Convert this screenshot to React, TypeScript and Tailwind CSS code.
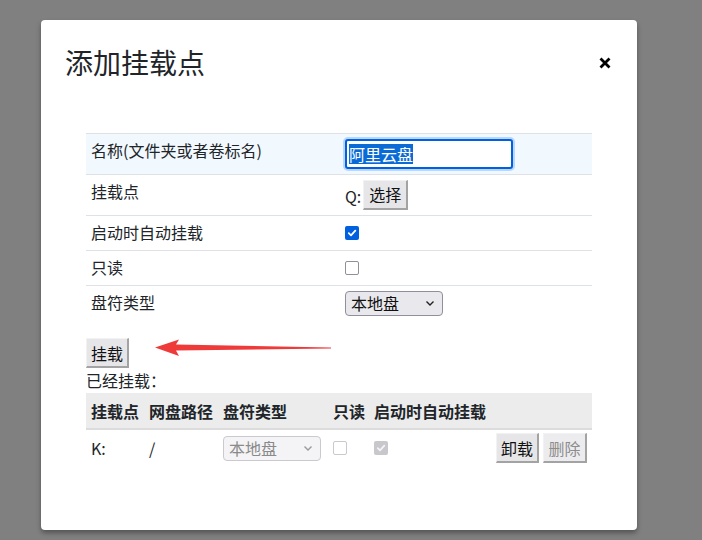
import React from 'react';

const font = { fontFamily: '"Noto Sans CJK SC", "Noto Sans", sans-serif' };

function Check({ checked, disabled }: { checked?: boolean; disabled?: boolean }) {
  if (checked) {
    return (
      <span
        className={`inline-flex h-[14px] w-[14px] items-center justify-center rounded-[2px] ${
          disabled ? 'bg-[#c8c8cc]' : 'bg-[#0060df]'
        }`}
      >
        <svg width="10" height="10" viewBox="0 0 10 10">
          <path d="M1.8 5.2 L4 7.3 L8.3 2.6" fill="none" stroke={disabled ? '#f4f4f6' : '#fff'} strokeWidth="1.8" strokeLinecap="round" strokeLinejoin="round" />
        </svg>
      </span>
    );
  }
  return (
    <span
      className={`inline-block h-[14px] w-[14px] rounded-[2px] border-[1.5px] bg-white ${
        disabled ? 'border-[#c9c9cf]' : 'border-[#8f8f9d]'
      }`}
    />
  );
}

function Btn({ children, disabled, w }: { children: React.ReactNode; disabled?: boolean; w: string }) {
  return (
    <span
      className={`inline-flex h-[30px] ${w} items-center justify-center border-t border-l border-t-[#f2f2f2] border-l-[#f2f2f2] border-b-2 border-r-2 border-b-[#a3a3a3] border-r-[#a3a3a3] text-[16px] leading-none ${
        disabled ? 'bg-[#ececee] text-[#8d8d8d]' : 'bg-[#e6e6e9] text-[#111]'
      }`}
    >
      {children}
    </span>
  );
}

function Select({ disabled }: { disabled?: boolean }) {
  return (
    <span
      className={`inline-flex h-[25px] w-[98px] items-center justify-between rounded-[4px] border pl-[5px] pr-[7px] text-[16px] leading-none ${
        disabled ? 'border-[#c9c9cf] bg-[#f4f4f6] text-[#8a8a8a]' : 'border-[#8f8f9d] bg-[#e9e9ed] text-[#111]'
      }`}
    >
      <span>本地盘</span>
      <svg width="10" height="7" viewBox="0 0 10 7">
        <path d="M1.5 1.5 L5 5 L8.5 1.5" fill="none" stroke={disabled ? '#9a9a9a' : '#222'} strokeWidth="1.4" />
      </svg>
    </span>
  );
}

function Row({ label, h, first, children }: { label: string; h: string; first?: boolean; children: React.ReactNode }) {
  return (
    <div className={`flex border-t border-[#dee2e6] ${h} ${first ? 'bg-[#f2f9fe]' : ''}`}>
      <div className="w-[259px] self-start pl-[5px] pt-[4px] leading-[24px]">{label}</div>
      <div className="flex flex-1 items-center">{children}</div>
    </div>
  );
}

export default function App() {
  return (
    <div className="h-[540px] w-full bg-[#808080] pl-[41px] pt-[20px] text-[16px] text-[#212529]" style={font}>
      <div className="h-[510px] w-[596px] rounded-[4px] bg-white shadow-[0_3px_5px_rgba(0,0,0,0.35)]">
        {/* header */}
        <div className="flex h-[84px] items-start justify-between pl-[25px] pr-[26px] pt-[24px]">
          <h1 className="-ml-[1px] text-[28px] leading-[36px] font-normal text-[#212529]">添加挂载点</h1>
          <svg className="mt-[13px]" width="12" height="12" viewBox="0 0 12 12">
            <path d="M1.5 1.5 L10.5 10.5 M10.5 1.5 L1.5 10.5" stroke="#000" strokeWidth="2.8" />
          </svg>
        </div>

        <div className="mx-[45px] mt-[29px]">
          {/* form table */}
          <div>
            <Row label="名称(文件夹或者卷标名)" h="h-[41px]" first>
              <span className="-ml-[2px] inline-flex h-[34px] w-[172px] items-center rounded-[5px] bg-[#b9d7fb] p-[2px]">
                <span className="flex h-full w-full items-center rounded-[3px] border-2 border-[#0060df] bg-white pl-[2px]">
                  <span className="bg-[#0b6bd6] leading-[20px] text-white">阿里云盘</span>
                </span>
              </span>
            </Row>
            <Row label="挂载点" h="h-[41px]">
              <span className="mr-[2px] mt-[1px]">Q:</span>
              <span className="-mt-[1px]">
                <Btn w="w-[45px]">选择</Btn>
              </span>
            </Row>
            <Row label="启动时自动挂载" h="h-[35px]">
              <Check checked />
            </Row>
            <Row label="只读" h="h-[35px]">
              <Check />
            </Row>
            <Row label="盘符类型" h="h-[35px]">
              <Select />
            </Row>
          </div>

          {/* mount button + arrow */}
          <div className="mt-[18px] flex items-start">
            <span className="h-[29px]">
              <Btn w="w-[43px]">挂载</Btn>
            </span>
            <svg className="ml-[25px] mt-[1px]" width="178" height="18" viewBox="0 0 178 18">
              <polygon points="1,8.5 25,0.5 22,5.5 177,8.6 177,9.6 22,11.5 25,17" fill="#ef3a3a" />
            </svg>
          </div>
          <div className="mt-[1px] leading-[24px]">已经挂载：</div>

          {/* mounted table */}
          <div className="mt-[1px]">
            <div className="flex h-[37px] items-center border-b-2 border-[#dcdcdc] bg-[#ececec] font-bold">
              <div className="w-[58px] pl-[5px]">挂载点</div>
              <div className="w-[74px] pl-[5px]">网盘路径</div>
              <div className="w-[110px] pl-[5px]">盘符类型</div>
              <div className="w-[41px] pl-[5px]">只读</div>
              <div className="flex-1 pl-[5px]">启动时自动挂载</div>
            </div>
            <div className="flex h-[36px] items-center">
              <div className="w-[58px] pl-[5px]">K:</div>
              <div className="w-[74px] pl-[5px]">/</div>
              <div className="flex w-[110px] items-center pl-[5px]">
                <Select disabled />
              </div>
              <div className="flex w-[41px] items-center pl-[5px]">
                <Check disabled />
              </div>
              <div className="flex flex-1 items-center pl-[5px]">
                <Check checked disabled />
              </div>
              <div className="flex items-center gap-[4px] pr-[5px]">
                <Btn w="w-[43px]">卸载</Btn>
                <Btn w="w-[44px]" disabled>删除</Btn>
              </div>
            </div>
          </div>
        </div>
      </div>
    </div>
  );
}
